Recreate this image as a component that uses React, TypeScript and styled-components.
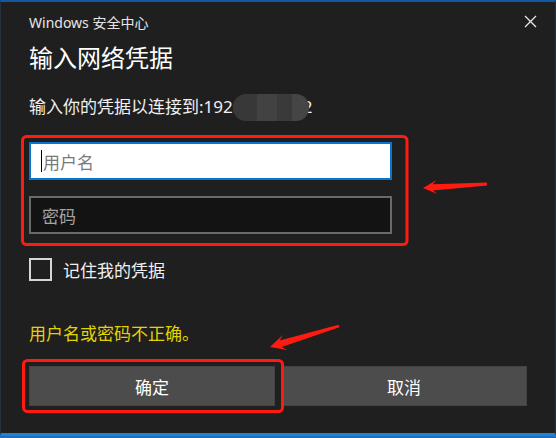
import * as React from "react";
import styled, { createGlobalStyle } from "styled-components";

const GlobalStyle = createGlobalStyle`
  html, body {
    margin: 0;
    padding: 0;
    background: #1a6fc0;
  }
  body {
    font-family: "Noto Sans", "Noto Sans CJK SC", sans-serif;
  }
`;

const Window = styled.div`
  position: relative;
  box-sizing: border-box;
  width: 556px;
  height: 436px;
  display: flex;
  flex-direction: column;
  padding: 0 28px;
  background: #1f1f1f;
  border-top: 2px solid #1258a3;
  border-bottom: 3px solid #1c84d8;
  border-left: 1px solid #26323d;
  border-right: 1px solid #26323d;
  color: #ffffff;
`;

const TitleBar = styled.div`
  height: 39px;
  display: flex;
  align-items: center;
  justify-content: space-between;
  margin-right: -28px;
`;

const TitleText = styled.span`
  font-size: 14px;
  color: #e6e6e6;
  margin-top: 1px;
`;

const CloseButton = styled.div`
  width: 50px;
  height: 39px;
  display: flex;
  align-items: center;
  justify-content: center;
`;

const Heading = styled.div`
  font-family: "Noto Sans CJK SC", sans-serif;
  font-size: 24px;
  line-height: 32px;
  color: #ffffff;
`;

const Subtitle = styled.div`
  margin-top: 22px;
  height: 24px;
  font-size: 17px;
  line-height: 24px;
  color: #f0f0f0;
  display: flex;
  align-items: center;
`;

const Blur = styled.span`
  position: relative;
  z-index: 1;
  display: inline-block;
  flex: none;
  width: 76px;
  height: 27px;
  margin-right: -6px;
  border-radius: 13px;
  background: linear-gradient(
    90deg,
    #383838 0 32%,
    #424242 32% 58%,
    #3a3a3a 58% 78%,
    #454545 78% 100%
  );
`;

const Fields = styled.div`
  margin-top: 23px;
  display: flex;
  flex-direction: column;
  gap: 16px;
  width: 363px;
`;

const Field = styled.div<{ $active?: boolean }>`
  box-sizing: border-box;
  height: 38px;
  display: flex;
  align-items: center;
  padding-left: ${(p) => (p.$active ? "10px" : "11px")};
  font-family: "Noto Sans CJK SC", sans-serif;
  font-size: 17px;
  background: ${(p) => (p.$active ? "#ffffff" : "#131313")};
  border: 2px solid ${(p) => (p.$active ? "#0a74d0" : "#6a6a6a")};
  color: ${(p) => (p.$active ? "#7a7a7a" : "#a3a3a3")};
`;

const Caret = styled.span`
  width: 1px;
  height: 22px;
  background: #000000;
  margin-right: 1px;
`;

const CheckRow = styled.label`
  margin-top: 23px;
  height: 24px;
  display: flex;
  align-items: center;
  gap: 11px;
  font-family: "Noto Sans CJK SC", sans-serif;
  font-size: 17px;
  color: #f0f0f0;
`;

const Box = styled.span`
  box-sizing: border-box;
  width: 23px;
  height: 23px;
  border: 2px solid #d6d6d6;
`;

const ErrorText = styled.div`
  margin-top: 40px;
  font-family: "Noto Sans CJK SC", sans-serif;
  font-size: 17px;
  line-height: 24px;
  color: #e2d400;
`;

const Buttons = styled.div`
  margin-top: 21px;
  display: grid;
  grid-template-columns: 1fr 1fr;
  gap: 6px;
`;

const Button = styled.div`
  box-sizing: border-box;
  height: 40px;
  display: flex;
  align-items: center;
  justify-content: center;
  background: #4c4c4c;
  border: 1px solid #434343;
  font-family: "Noto Sans CJK SC", sans-serif;
  font-size: 17px;
  color: #ffffff;
`;

const Annotations = styled.svg`
  position: absolute;
  left: -1px;
  top: -2px;
  width: 556px;
  height: 438px;
  pointer-events: none;
  z-index: 5;
`;

const arrowPoints = (
  tx: number,
  ty: number,
  px: number,
  py: number,
  h: number,
  wh: number,
  ws: number,
  wt: number
) => {
  const len = Math.hypot(px - tx, py - ty);
  const dx = (px - tx) / len;
  const dy = (py - ty) / len;
  const nx = -dy;
  const ny = dx;
  const bx = px - dx * h;
  const by = py - dy * h;
  const jx = px - dx * h * 0.7;
  const jy = py - dy * h * 0.7;
  const pts = [
    [tx + nx * wt, ty + ny * wt],
    [jx + nx * ws, jy + ny * ws],
    [bx + nx * wh, by + ny * wh],
    [px, py],
    [bx - nx * wh, by - ny * wh],
    [jx - nx * ws, jy - ny * ws],
    [tx - nx * wt, ty - ny * wt],
  ];
  return pts.map((p) => p.map((v) => v.toFixed(1)).join(",")).join(" ");
};

const RED = "#ff1a12";

export default function App() {
  return (
    <>
      <GlobalStyle />
      <Window>
        <TitleBar>
          <TitleText>Windows 安全中心</TitleText>
          <CloseButton>
            <svg width="13" height="13" viewBox="0 0 13 13">
              <path d="M1 1 L12 12 M12 1 L1 12" stroke="#e8e8e8" strokeWidth="1.3" />
            </svg>
          </CloseButton>
        </TitleBar>
        <Heading>输入网络凭据</Heading>
        <Subtitle>
          输入你的凭据以连接到:192
          <Blur />
          2
        </Subtitle>
        <Fields>
          <Field $active>
            <Caret />
            用户名
          </Field>
          <Field>密码</Field>
        </Fields>
        <CheckRow>
          <Box />
          记住我的凭据
        </CheckRow>
        <ErrorText>用户名或密码不正确。</ErrorText>
        <Buttons>
          <Button>确定</Button>
          <Button>取消</Button>
        </Buttons>
        <Annotations viewBox="0 0 556 438">
          <rect x="22.5" y="136.5" width="384.5" height="108" rx="4" fill="none" stroke={RED} strokeWidth="3" />
          <rect x="23.5" y="360.5" width="259" height="51" rx="4" fill="none" stroke={RED} strokeWidth="3" />
          <polygon points={arrowPoints(487, 184, 423, 188, 14, 7, 3.2, 1.6)} fill={RED} />
          <polygon points={arrowPoints(339, 326, 270, 347, 16, 8, 3.5, 1.4)} fill={RED} />
        </Annotations>
      </Window>
    </>
  );
}
